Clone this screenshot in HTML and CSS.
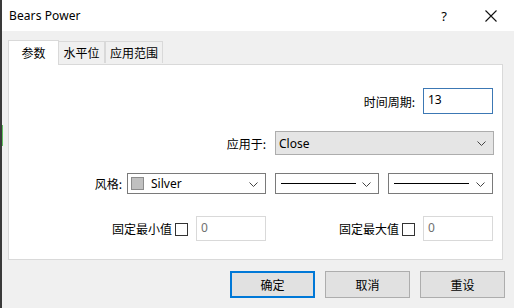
FILE: index.html
```html
<!DOCTYPE html>
<html>
<head>
<meta charset="utf-8">
<link rel="stylesheet" href="styles.css">
</head>
<body>
<div class="window">
  <div class="titlebar">
    <span class="title">Bears Power</span>
    <span class="help">?</span>
    <svg class="close" width="12" height="12" viewBox="0 0 12 12"><path d="M0.5 0.5 L11.5 11.5 M11.5 0.5 L0.5 11.5" stroke="#111" stroke-width="1.1" fill="none"/></svg>
  </div>
  <div class="body">
    <div class="tabs">
      <div class="tab active">参数</div>
      <div class="tab t2">水平位</div>
      <div class="tab t3">应用范围</div>
    </div>
    <div class="panel">
      <div class="row r1">
        <span class="lbl">时间周期:</span>
        <div class="input focus">13</div>
      </div>
      <div class="row r2">
        <span class="lbl">应用于:</span>
        <div class="select apply"><span>Close</span><svg class="chev" width="9" height="5" viewBox="0 0 9 5"><path d="M0.5 0.5 L4.5 4.5 L8.5 0.5" stroke="#444" fill="none"/></svg></div>
      </div>
      <div class="row r3">
        <span class="lbl">风格:</span>
        <div class="select color"><span class="swatch"></span><span class="ctext">Silver</span><svg class="chev" width="9" height="5" viewBox="0 0 9 5"><path d="M0.5 0.5 L4.5 4.5 L8.5 0.5" stroke="#444" fill="none"/></svg></div>
        <div class="select line l2"><span class="hline"></span><svg class="chev" width="9" height="5" viewBox="0 0 9 5"><path d="M0.5 0.5 L4.5 4.5 L8.5 0.5" stroke="#444" fill="none"/></svg></div>
        <div class="select line l3"><span class="hline"></span><svg class="chev" width="9" height="5" viewBox="0 0 9 5"><path d="M0.5 0.5 L4.5 4.5 L8.5 0.5" stroke="#444" fill="none"/></svg></div>
      </div>
      <div class="row r4">
        <div class="fixgrp">
          <span class="lbl">固定最小值</span>
          <span class="check"></span>
          <div class="input dis">0</div>
        </div>
        <div class="fixgrp">
          <span class="lbl">固定最大值</span>
          <span class="check"></span>
          <div class="input dis">0</div>
        </div>
      </div>
    </div>
    <div class="buttons">
      <div class="btn ok">确定</div>
      <div class="btn">取消</div>
      <div class="btn">重设</div>
    </div>
  </div>
</div>
</body>
</html>
```
FILE: styles.css
```css
* { box-sizing: border-box; }
html, body { margin: 0; padding: 0; }
body {
  width: 514px;
  height: 308px;
  overflow: hidden;
  background: #f0f0f0;
  font-family: "Noto Sans", "Noto Sans CJK SC", sans-serif;
  font-size: 12px;
  color: #000;
}
.window {
  width: 514px;
  height: 308px;
  border-left: 2px solid #3a3a3a;
  background: linear-gradient(to bottom, transparent 125px, #5fbf5f 125px, #5fbf5f 146px, transparent 146px) left top / 1px 100% no-repeat, #f0f0f0;
}
.titlebar {
  height: 31px;
  background: #fff;
  display: flex;
  align-items: center;
  padding-left: 7px;
  padding-right: 17px;
}
.title { font-family: "Noto Sans", sans-serif; font-size: 12px; letter-spacing: 0.1px; }
.help { margin-left: auto; margin-right: 38px; font-size: 13px; font-family: "Noto Sans", sans-serif; }
.close { display: block; }
.body { padding: 8px 9px 0 6px; }
.tabs { display: flex; height: 25px; align-items: flex-end; position: relative; z-index: 1; }
.tab {
  height: 22px;
  border: 1px solid #d9d9d9;
  border-bottom: none;
  background: #f0f0f0;
  font-family: "Noto Sans CJK SC", sans-serif;
  display: flex;
  align-items: center;
  justify-content: center;
  margin-bottom: 1px;
}
.tab.active { height: 25px; width: 51px; background: #fff; margin-bottom: -1px; border-right: 1px solid #d9d9d9; padding-bottom: 2px; }
.t2 { width: 46px; border-left: none; }
.t3 { width: 58px; border-left: 1px solid #d9d9d9; }
.panel {
  width: 495px;
  height: 196px;
  background: #fff;
  border: 1px solid #d9d9d9;
  padding: 23px 9px 0 9px;
}
.row { display: flex; justify-content: flex-end; align-items: center; }
.lbl { font-family: "Noto Sans CJK SC", sans-serif; white-space: nowrap; }
.r1 .lbl { margin-right: 8px; }
.r1 { height: 26px; }
.r2 { height: 24px; margin-top: 17px; margin-right: -1px; }
.r2 .lbl { margin-right: 9px; }
.r3 { height: 21px; margin-top: 18px; }
.r3 .lbl { margin-right: 5px; }
.r4 { height: 25px; margin-top: 22px; }
.input {
  width: 70px;
  height: 26px;
  border: 1px solid #7a7a7a;
  padding: 2px 0 0 4px;
  font-family: "Noto Sans", sans-serif;
  font-size: 12px;
}
.input.focus { border-color: #3c78b4; }
.input.dis { height: 25px; border-color: #d9d9d9; color: #707070; }
.select {
  height: 100%;
  border: 1px solid #7a7a7a;
  display: flex;
  align-items: center;
  font-family: "Noto Sans", sans-serif;
  position: relative;
}
.select .chev { position: absolute; right: 7px; top: 50%; margin-top: -2px; }
.apply { width: 219px; background: #e5e5e5; border-color: #adadad; padding-left: 3px; }
.color { width: 139px; padding-left: 3px; }
.swatch { width: 13px; height: 13px; background: #c0c0c0; border: 1px solid #8c8c8c; margin-right: 7px; }
.line { margin-left: 9px; padding-left: 5px; }
.l2 { width: 104px; }
.l3 { width: 105px; }
.hline { width: 75px; height: 1px; background: #000; }
.fixgrp { display: flex; align-items: center; }
.fixgrp + .fixgrp { margin-left: 73px; }
.check { width: 13px; height: 13px; border: 1px solid #333; margin-left: 3px; margin-right: 8px; margin-top: 2px; }
.buttons { display: flex; justify-content: flex-end; margin-top: 11px; }
.btn {
  width: 85px;
  height: 27px;
  background: #e1e1e1;
  border: 1px solid #adadad;
  display: flex;
  align-items: center;
  justify-content: center;
  font-family: "Noto Sans CJK SC", sans-serif;
  margin-left: 10px;
}
.btn.ok { border: 2px solid #0078d7; }
```
